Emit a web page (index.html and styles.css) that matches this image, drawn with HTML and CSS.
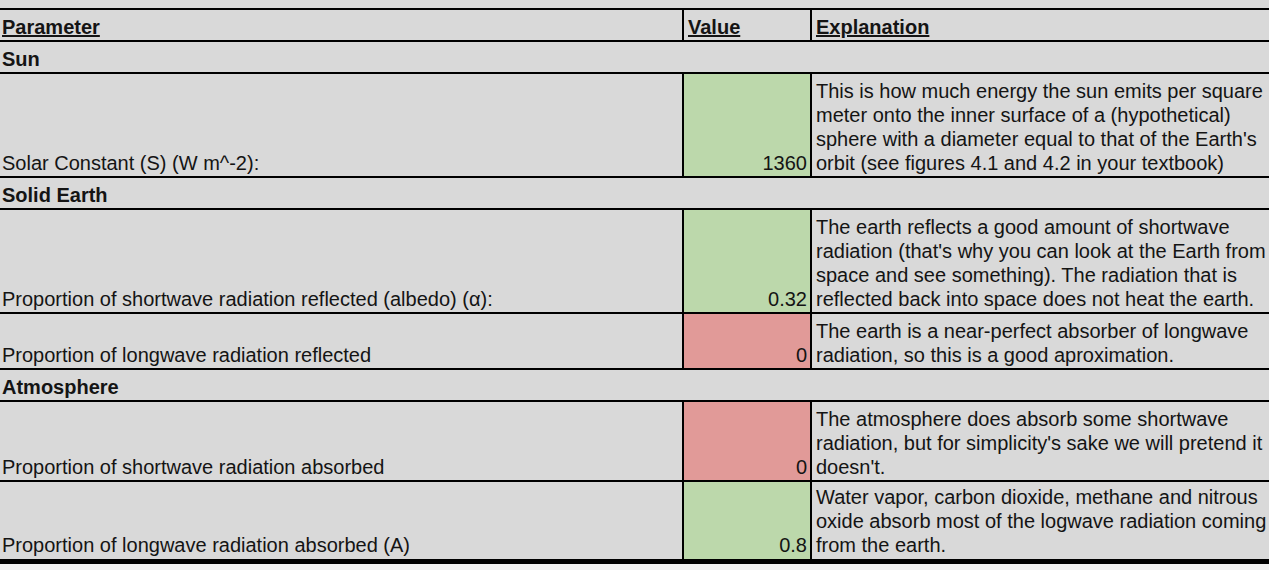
FILE: index.html
```html
<!DOCTYPE html>
<html lang="en">
<head>
<meta charset="utf-8">
<title>Energy balance parameters</title>
<link rel="stylesheet" href="styles.css">
</head>
<body>
<div class="sheet">
<table class="params">
  <colgroup>
    <col class="c-param">
    <col class="c-value">
    <col class="c-expl">
  </colgroup>
  <tr class="head">
    <td class="param"><u>Parameter</u></td>
    <td class="value-h"><u>Value</u></td>
    <td class="expl"><u>Explanation</u></td>
  </tr>
  <tr class="section"><td colspan="3">Sun</td></tr>
  <tr>
    <td class="param">Solar Constant (S) (W m^-2):</td>
    <td class="value good">1360</td>
    <td class="expl">This is how much energy the sun emits per square<br>meter onto the inner surface of a (hypothetical)<br>sphere with a diameter equal to that of the Earth's<br>orbit (see figures 4.1 and 4.2 in your textbook)</td>
  </tr>
  <tr class="section"><td colspan="3">Solid Earth</td></tr>
  <tr>
    <td class="param">Proportion of shortwave radiation reflected (albedo) (α):</td>
    <td class="value good">0.32</td>
    <td class="expl">The earth reflects a good amount of shortwave<br>radiation (that's why you can look at the Earth from<br>space and see something). The radiation that is<br>reflected back into space does not heat the earth.</td>
  </tr>
  <tr>
    <td class="param">Proportion of longwave radiation reflected</td>
    <td class="value bad">0</td>
    <td class="expl">The earth is a near-perfect absorber of longwave<br>radiation, so this is a good aproximation.</td>
  </tr>
  <tr class="section"><td colspan="3">Atmosphere</td></tr>
  <tr>
    <td class="param">Proportion of shortwave radiation absorbed</td>
    <td class="value bad">0</td>
    <td class="expl">The atmosphere does absorb some shortwave<br>radiation, but for simplicity's sake we will pretend it<br>doesn't.</td>
  </tr>
  <tr class="last">
    <td class="param">Proportion of longwave radiation absorbed (A)</td>
    <td class="value good">0.8</td>
    <td class="expl">Water vapor, carbon dioxide, methane and nitrous<br>oxide absorb most of the logwave radiation coming<br>from the earth.</td>
  </tr>
</table>
</div>
</body>
</html>
```

FILE: styles.css
```css
html, body {
  margin: 0;
  padding: 0;
  background: #f1f1f1;
}

.sheet {
  background: #d9d9d9;
  padding-top: 8px;
  width: 1269px;
  overflow: hidden;
  border-bottom: 3px solid #000;
}

.params {
  border-collapse: collapse;
  table-layout: fixed;
  width: 1269px;
  font-family: "Liberation Sans", Arial, sans-serif;
  font-size: 20px;
  line-height: 24px;
  color: #141414;
  border-top: 2px solid #000;
  border-bottom: 2px solid #000;
}

.c-param { width: 683px; }
.c-value { width: 128px; }
.c-expl { width: 458px; }

.params td {
  border-bottom: 2px solid #000;
  vertical-align: bottom;
  padding: 5px 0 1px 2px;
  white-space: nowrap;
  overflow: hidden;
}

.params .last td {
  padding-top: 3px;
  padding-bottom: 2px;
}

.params .value,
.params .value-h {
  border-left: 2px solid #000;
  border-right: 2px solid #000;
}

.params .value {
  text-align: right;
  padding-right: 3px;
}

.params .value-h {
  padding-left: 4px;
  font-weight: bold;
}

.params .expl {
  padding-left: 4px;
}

.head td {
  font-weight: bold;
}

.section td {
  font-weight: bold;
}

.good { background: #bcd8ab; }
.bad { background: #e19a98; }
```
